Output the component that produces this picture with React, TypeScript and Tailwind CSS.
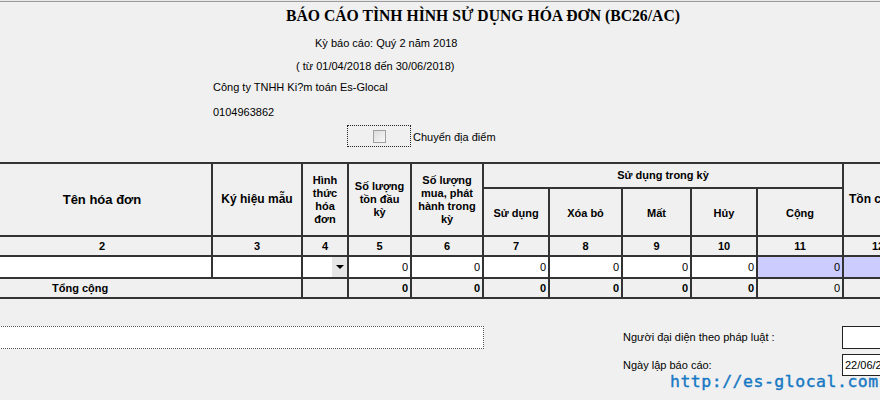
import { ReactNode } from "react";

const cols = ["2", "3", "4", "5", "6", "7", "8", "9", "10", "11", "12"];

function Head({ children, className = "" }: { children: ReactNode; className?: string }) {
  return (
    <div className={`bg-[#f0f0f0] flex items-center justify-center text-center font-bold leading-[13px] ${className}`}>
      {children}
    </div>
  );
}

function Num({ v = "0", bold = false, bg = "bg-white" }: { v?: string; bold?: boolean; bg?: string }) {
  return (
    <div className={`${bg} flex items-center justify-end pr-[2px] ${bold ? "font-bold" : ""}`}>{v}</div>
  );
}

export default function App() {
  return (
    <div className="relative w-[880px] h-[400px] overflow-hidden bg-[#f0f0f0] text-black text-[11px] font-['Liberation_Sans',Arial,sans-serif]">
      <div className="h-px bg-[#e8e8e8]" />
      <div className="h-px bg-[#9a9a9a]" />

      {/* report heading */}
      <h1 className="mt-[4px] ml-[286px] h-[20px] leading-[20px] text-[15.7px] font-bold font-['Liberation_Serif',serif] whitespace-nowrap">
        BÁO CÁO TÌNH HÌNH SỬ DỤNG HÓA ĐƠN (BC26/AC)
      </h1>
      <div className="mt-[10px] ml-[315px] h-[14px] leading-[14px]">Kỳ báo cáo: Quý 2 năm 2018</div>
      <div className="mt-[9px] ml-[296px] h-[14px] leading-[14px]">( từ 01/04/2018 đến 30/06/2018)</div>
      <div className="mt-[7px] ml-[213px] h-[14px] leading-[14px]">Công ty TNHH Ki?m toán Es-Glocal</div>
      <div className="mt-[11px] ml-[213px] h-[14px] leading-[14px]">0104963862</div>

      <div className="mt-[6px] ml-[347px] flex items-center">
        <div className="w-[64px] h-[22px] border border-dotted border-[#222] flex items-center justify-center">
          <div className="w-[13px] h-[13px] border border-[#a0a0a0] bg-gradient-to-br from-[#dcdcdc] to-[#f8f8f8]" />
        </div>
        <span className="ml-[2px] mt-[2px]">Chuyển địa điểm</span>
      </div>

      {/* table */}
      <div className="mt-[15px] -ml-[9px] w-max p-[2px] bg-[#333] grid gap-[2px] grid-cols-[218px_88px_44px_61px_70px_64px_71px_67px_64px_84px_68px] grid-rows-[23px_46px_18px_20px_18px]">
        <Head className="row-span-2 text-[13px]">Tên hóa đơn</Head>
        <Head className="row-span-2 text-[12px]">Ký hiệu mẫu</Head>
        <Head className="row-span-2">
          Hình
          <br />
          thức
          <br />
          hóa
          <br />
          đơn
        </Head>
        <Head className="row-span-2">
          Số lượng
          <br />
          tồn đầu
          <br />
          kỳ
        </Head>
        <Head className="row-span-2">
          Số lượng
          <br />
          mua, phát
          <br />
          hành trong
          <br />
          kỳ
        </Head>
        <Head className="col-span-5">Sử dụng trong kỳ</Head>
        <Head className="row-span-2 text-[12px] justify-start pl-[5px] whitespace-nowrap">Tồn cuối kỳ</Head>
        <Head className="pt-[2px]">Sử dụng</Head>
        <Head className="pt-[2px]">Xóa bỏ</Head>
        <Head className="pt-[2px]">Mất</Head>
        <Head className="pt-[2px]">Hủy</Head>
        <Head className="pt-[2px]">Cộng</Head>

        {cols.map((c) => (
          <Head key={c}>{c}</Head>
        ))}

        <div className="bg-white" />
        <div className="bg-white" />
        <div className="bg-white flex justify-end">
          <div className="w-[15px] bg-[#e6e6e6] flex items-center justify-center">
            <div className="w-0 h-0 border-l-[4px] border-r-[4px] border-t-[4px] border-l-transparent border-r-transparent border-t-black" />
          </div>
        </div>
        <Num />
        <Num />
        <Num />
        <Num />
        <Num />
        <Num />
        <Num bg="bg-[#ccccff]" />
        <Num bg="bg-[#ccccff]" />

        <div className="col-span-2 bg-[#f0f0f0] flex items-center pl-[59px] font-bold">Tổng cộng</div>
        <div className="bg-[#f0f0f0]" />
        <Num bold bg="bg-[#f0f0f0]" />
        <Num bold bg="bg-[#f0f0f0]" />
        <Num bold bg="bg-[#f0f0f0]" />
        <Num bold bg="bg-[#f0f0f0]" />
        <Num bold bg="bg-[#f0f0f0]" />
        <Num bold bg="bg-[#f0f0f0]" />
        <Num bg="bg-[#f0f0f0]" />
        <div className="bg-[#f0f0f0]" />
      </div>

      {/* footer */}
      <div className="mt-[27px] flex items-start w-max">
        <div className="shrink-0 -ml-[2px] w-[486px] h-[23px] bg-white border-y border-r border-dotted border-[#555]" />
        <div className="shrink-0 ml-[139px] flex flex-col">
          <div className="flex items-center h-[23px]">
            <span className="shrink-0 w-[219px]">Người đại diện theo pháp luật :</span>
            <div className="shrink-0 w-[60px] h-[23px] bg-white border border-[#222]" />
          </div>
          <div className="mt-[5px] flex items-center h-[22px]">
            <span className="shrink-0 w-[219px] pt-[1px]">Ngày lập báo cáo:</span>
            <div className="shrink-0 w-[60px] h-[22px] bg-white border border-[#222] pl-[2px] flex items-center whitespace-nowrap">
              22/06/2018
            </div>
          </div>
        </div>
      </div>

      {/* watermark */}
      <div className="absolute left-[670px] top-[372px] text-[16.5px] leading-[20px] tracking-[0.5px] text-[#1778c4] [-webkit-text-stroke:0.4px_#1778c4] font-['DejaVu_Sans_Mono',monospace] whitespace-nowrap">
        http://es-glocal.com
      </div>
    </div>
  );
}
